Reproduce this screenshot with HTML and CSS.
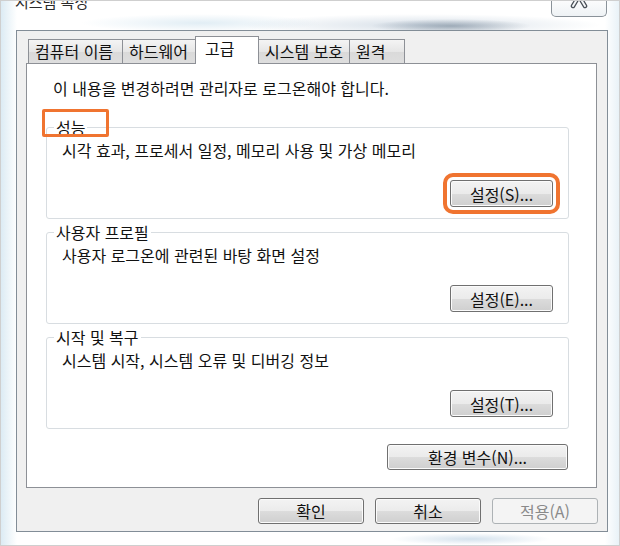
FILE: index.html
```html
<!DOCTYPE html>
<html lang="ko">
<head>
<meta charset="utf-8">
<title>시스템 속성</title>
<link rel="stylesheet" href="styles.css">
</head>
<body>
<div class="shot">
  <div class="titlebar">
    <span class="title">시스템 속성</span>
    <span class="close">
      <svg width="54" height="17" viewBox="0 0 54 17">
        <path d="M27 -3 L21 7 M27 -3 L33 7" stroke="#4a5057" stroke-width="4.5" stroke-linecap="round" fill="none"/>
        <path d="M27 -3 L21 7 M27 -3 L33 7" stroke="#f4f6f8" stroke-width="2" stroke-linecap="round" fill="none"/>
      </svg>
    </span>
  </div>
  <div class="client">
    <div class="tabs">
      <div class="tab t1">컴퓨터 이름</div>
      <div class="tab t2">하드웨어</div>
      <div class="tab sel">고급</div>
      <div class="tab t4">시스템 보호</div>
      <div class="tab t5">원격</div>
    </div>
    <div class="panel">
      <p class="note">이 내용을 변경하려면 관리자로 로그온해야 합니다.</p>
      <div class="group first">
        <span class="mark"></span>
        <div class="legend">성능</div>
        <div class="desc">시각 효과, 프로세서 일정, 메모리 사용 및 가상 메모리</div>
        <div class="row"><button class="btn gbtn hl">설정(S)...</button></div>
      </div>
      <div class="group">
        <div class="legend">사용자 프로필</div>
        <div class="desc">사용자 로그온에 관련된 바탕 화면 설정</div>
        <div class="row"><button class="btn gbtn">설정(E)...</button></div>
      </div>
      <div class="group">
        <div class="legend">시작 및 복구</div>
        <div class="desc">시스템 시작, 시스템 오류 및 디버깅 정보</div>
        <div class="row"><button class="btn gbtn">설정(T)...</button></div>
      </div>
      <div class="envrow"><button class="btn envbtn">환경 변수(N)...</button></div>
    </div>
    <div class="footer">
      <button class="btn fbtn">확인</button>
      <button class="btn fbtn">취소</button>
      <button class="btn fbtn disabled">적용(A)</button>
    </div>
  </div>
</div>
</body>
</html>
```
FILE: styles.css
```css
* { box-sizing: border-box; }
html, body { margin: 0; padding: 0; }
body {
  width: 620px;
  height: 546px;
  overflow: hidden;
  background: #fff;
  font-family: "Noto Sans CJK KR", "Noto Sans", sans-serif;
  font-size: 16px;
  color: #111;
}
.shot {
  width: 620px;
  height: 546px;
  border: 1px solid #cfcfcf;
  padding: 0 11px 0 15px;
  overflow: hidden;
  background:
    radial-gradient(80px 7px at 450px 25px, rgba(80, 100, 120, 0.45), rgba(80, 100, 120, 0) 100%),
    radial-gradient(180px 11px at 420px 24px, rgba(140, 165, 190, 0.35), rgba(140, 165, 190, 0) 100%),
    radial-gradient(120px 9px at 200px 22px, rgba(170, 205, 225, 0.35), rgba(170, 205, 225, 0) 100%),
    radial-gradient(80px 6px at 470px 538px, rgba(160, 190, 215, 0.45), rgba(160, 190, 215, 0) 100%),
    linear-gradient(90deg, #dcebf4 0, #f6fafc 12px, #fff 16px, #fff 604px, #e7f1f7 619px);
}
.titlebar {
  height: 29px;
  width: 592px;
  display: flex;
  justify-content: space-between;
  align-items: flex-start;
}
.title {
  margin: -9px 0 0 -1px;
  line-height: 20px;
  font-size: 15px;
  color: #2b2b2b;
}
.close {
  display: block;
  width: 56px;
  height: 18px;
  margin: -2px 1px 0 0;
  border: 1px solid #8a9299;
  border-top: none;
  border-radius: 0 0 5px 5px;
  background: linear-gradient(#fdfdfd, #eef2f5);
  overflow: hidden;
}
.close svg { display: block; }
.client {
  width: 592px;
  height: 502px;
  border: 1px solid #828d97;
  background: #f0f0f0;
  padding: 5px 10px 0 9px;
}
.tabs {
  display: flex;
  align-items: flex-end;
  height: 27px;
  padding-left: 2px;
}
.tab {
  height: 24px;
  border: 1px solid #8d9096;
  border-bottom: none;
  margin-left: -1px;
  padding-left: 6px;
  line-height: 22px;
  white-space: nowrap;
  background: linear-gradient(#f4f4f4, #e6e6e6 50%, #d9d9d9 51%, #dedede);
}
.t1 { margin-left: 0; width: 95px; }
.t2 { width: 74px; }
.sel {
  width: 64px;
  height: 28px;
  margin-bottom: -1px;
  padding-left: 9px;
  background: #fff;
  position: relative;
  z-index: 1;
}
.t4 { width: 92px; }
.t5 { width: 56px; }
.panel {
  height: 425px;
  border: 1px solid #8d9096;
  background: #fff;
  padding: 14px 0 0 19px;
}
.note {
  margin: 0 0 0 7px;
  line-height: 20px;
}
.group {
  position: relative;
  width: 523px;
  margin-top: 13px;
  border: 1px solid #d8dde1;
  border-radius: 3px;
  padding: 0 15px 11px 15px;
}
.group.first { margin-top: 29px; }
.legend {
  width: fit-content;
  margin: -11px 0 0 -8px;
  padding: 0 2px;
  line-height: 20px;
  background: #fff;
}
.desc {
  margin-top: 3px;
  line-height: 20px;
}
.row {
  display: flex;
  justify-content: flex-end;
  margin-top: 20px;
}
.btn {
  font: inherit;
  color: #111;
  padding: 0;
  border: 1px solid #707070;
  border-radius: 3px;
  background: linear-gradient(#f3f3f3, #ebebeb 50%, #dcdcdc 51%, #cfcfcf);
  box-shadow: inset 0 0 0 1px #fbfbfb;
  line-height: 22px;
  text-align: center;
  white-space: nowrap;
}
.gbtn { width: 103px; height: 27px; }
.hl {
  outline: 4px solid #f07430;
  outline-offset: 3px;
  border-radius: 3px;
}
.mark {
  position: absolute;
  left: -5px;
  top: -19px;
  width: 67px;
  height: 28px;
  border: 3px solid #f07430;
  border-radius: 2px;
  z-index: 2;
}
.envrow {
  width: 523px;
  display: flex;
  justify-content: flex-end;
  margin-top: 15px;
}
.envbtn { width: 181px; height: 26px; margin-right: 1px; }
.footer {
  display: flex;
  justify-content: flex-end;
  gap: 11px;
  margin: 10px -1px 0 0;
}
.fbtn { width: 106px; height: 26px; }
.disabled {
  color: #8a8a8a;
  border-color: #adb2b5;
  background: #f4f4f4;
  box-shadow: none;
}
```
